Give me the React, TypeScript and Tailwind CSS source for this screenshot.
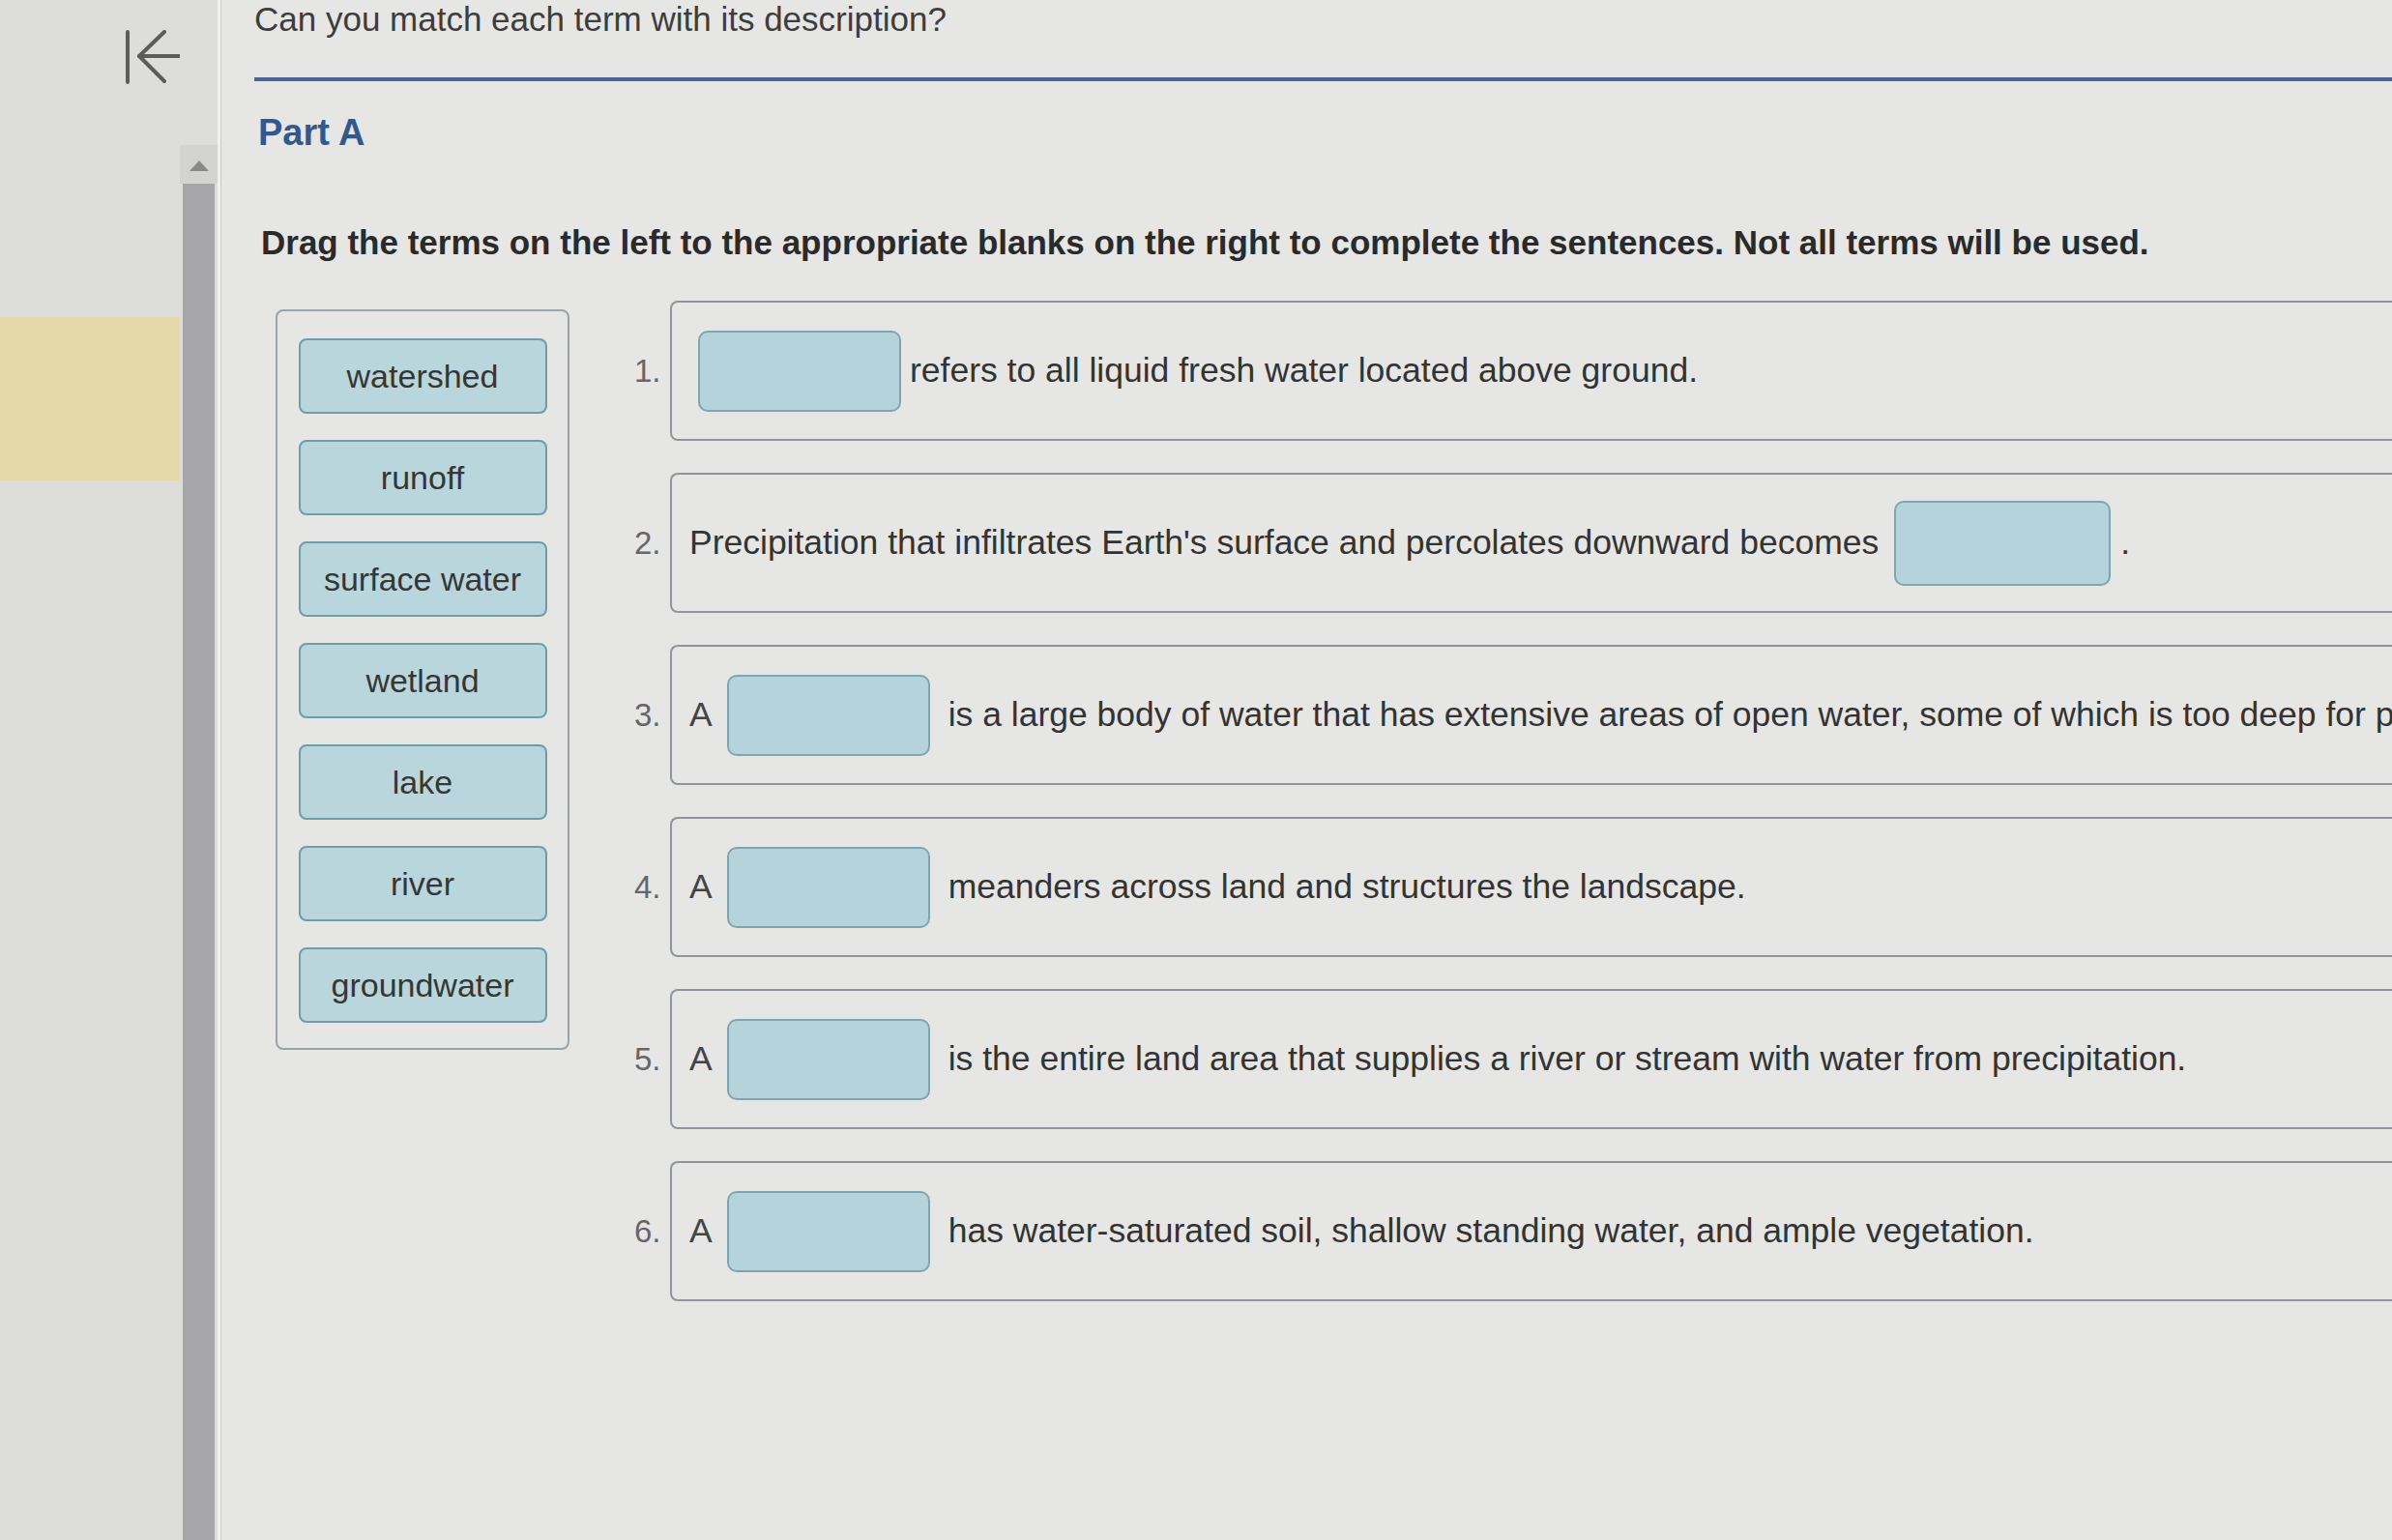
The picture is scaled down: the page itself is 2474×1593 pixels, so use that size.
import React from "react";

const terms = ["watershed", "runoff", "surface water", "wetland", "lake", "river", "groundwater"];

type Item = { n: number; a?: boolean; before?: string; after?: string };

const items: Item[] = [
  { n: 1, after: "refers to all liquid fresh water located above ground." },
  { n: 2, before: "Precipitation that infiltrates Earth's surface and percolates downward becomes", after: "." },
  { n: 3, a: true, after: "is a large body of water that has extensive areas of open water, some of which is too deep for plants to grow." },
  { n: 4, a: true, after: "meanders across land and structures the landscape." },
  { n: 5, a: true, after: "is the entire land area that supplies a river or stream with water from precipitation." },
  { n: 6, a: true, after: "has water-saturated soil, shallow standing water, and ample vegetation." },
];

function Blank({ wide }: { wide?: boolean }) {
  return (
    <div
      className={`${wide ? "w-[224px] h-[88px]" : "w-[210px] h-[84px]"} shrink-0 rounded-[10px] border-2 border-[#7ea6b2] bg-[#b4d3da]`}
    />
  );
}

function BackIcon() {
  return (
    <svg width="60" height="56" viewBox="0 0 60 56" fill="none" stroke="#5c5c5c" strokeWidth="4" strokeLinecap="round" strokeLinejoin="round">
      <line x1="3" y1="2" x2="3" y2="54" />
      <line x1="15" y1="27" x2="58" y2="27" />
      <polyline points="41,2 15,27 41,53" />
    </svg>
  );
}

export default function App() {
  return (
    <div
      className="flex w-[2474px] h-[1593px] overflow-hidden bg-[#e6e6e4] text-[#333]"
      style={{ fontFamily: '"Liberation Sans", Arial, Helvetica, sans-serif' }}
    >
      {/* left rail */}
      <div className="w-[186px] shrink-0 flex flex-col bg-[#dddddb]">
        <div className="mt-[31px] ml-[129px]">
          <BackIcon />
        </div>
        <div className="mt-[241px] h-[169px] bg-[#e6d9a9]" />
      </div>

      {/* scrollbar */}
      <div className="w-[42px] shrink-0 flex flex-col bg-[#dddddb] border-r-[3px] border-[#f1f1f0]">
        <div className="h-[150px]" />
        <div className="h-[40px] flex items-start justify-center pt-[16px] bg-[#d3d3d2]">
          <div className="w-0 h-0 border-l-[10px] border-r-[10px] border-b-[11px] border-l-transparent border-r-transparent border-b-[#8a8a8a]" />
        </div>
        <div className="flex-1 mx-[3px] bg-[#a7a7a9]" />
      </div>

      {/* main */}
      <div className="flex-1 min-w-0 flex flex-col border-l border-[#c9c9c8] pl-[34px]">
        <div className="text-[35px] leading-[40px] text-[#3d3d3d] whitespace-nowrap">
          Can you match each term with its description?
        </div>
        <div className="mt-[40px] h-[4px] bg-[#46658f]" />

        <div className="mt-[31px] pl-[4px] text-[38px] leading-[44px] font-bold text-[#33598c]">Part A</div>

        <div className="mt-[72px] pl-[7px] text-[35px] leading-[40px] font-bold text-[#2a2a2a] whitespace-nowrap">
          Drag the terms on the left to the appropriate blanks on the right to complete the sentences. Not all terms will be used.
        </div>

        <div className="mt-[40px] flex items-start">
          {/* term bank */}
          <div className="mt-[9px] ml-[22px] w-[304px] shrink-0 rounded-[8px] border-2 border-[#9aa3a8] pt-[28px] pb-[26px] flex flex-col items-center gap-[27px]">
            {terms.map((t) => (
              <div
                key={t}
                className="w-[257px] h-[78px] rounded-[8px] border-2 border-[#6f9cab] bg-[#b9d6dc] flex items-center justify-center text-[34px] text-[#363636]"
              >
                {t}
              </div>
            ))}
          </div>

          {/* questions */}
          <div className="ml-[67px] flex-1 min-w-0 flex flex-col gap-[33px]">
            {items.map((it) => (
              <div key={it.n} className="flex items-center">
                <div className="w-[37px] shrink-0 text-[33px] text-[#666] pr-[4px]">{it.n}.</div>
                <div className="flex-1 min-w-0 h-[145px] flex items-center rounded-l-[8px] border-2 border-r-0 border-[#8f959a] whitespace-nowrap overflow-hidden text-[35.5px] text-[#333]">
                  {it.n === 1 && (
                    <>
                      <div className="ml-[27px]">
                        <Blank />
                      </div>
                      <span className="ml-[9px]">{it.after}</span>
                    </>
                  )}
                  {it.n === 2 && (
                    <>
                      <span className="ml-[18px]">{it.before}</span>
                      <div className="ml-[16px]">
                        <Blank wide />
                      </div>
                      <span className="ml-[10px]">{it.after}</span>
                    </>
                  )}
                  {it.a && (
                    <>
                      <span className="ml-[18px] text-[#444]">A</span>
                      <div className="ml-[15px]">
                        <Blank />
                      </div>
                      <span className="ml-[19px]">{it.after}</span>
                    </>
                  )}
                </div>
              </div>
            ))}
          </div>
        </div>
      </div>
    </div>
  );
}
